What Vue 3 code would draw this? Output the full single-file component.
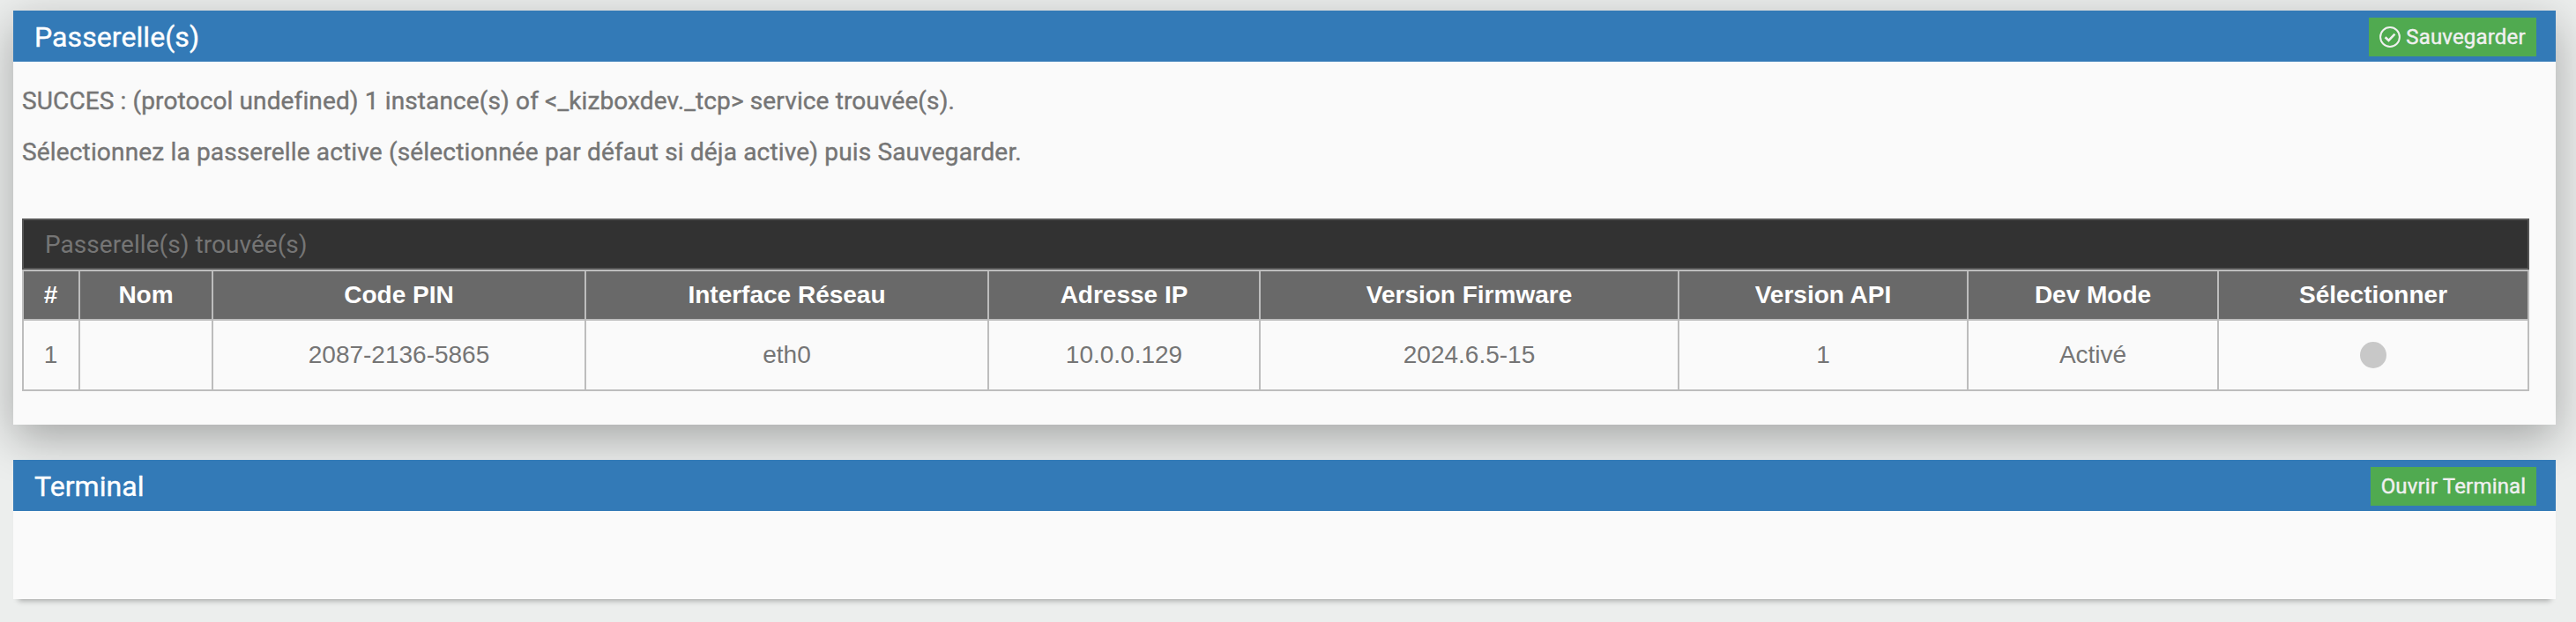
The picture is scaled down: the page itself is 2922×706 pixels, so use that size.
<template>
  <main class="page">
    <section class="panel panel-raised">
      <header class="panel-header">
        <h3 class="panel-title">Passerelle(s)</h3>
        <button class="btn-save" type="button">
          <svg class="icon" viewBox="0 0 24 24" aria-hidden="true">
            <circle cx="12" cy="12" r="10.9" />
            <path d="M6.6 12.2l3.9 3.7 7-7.2" />
          </svg>
          <span>Sauvegarder</span>
        </button>
      </header>
      <div class="panel-body">
        <p class="message message-status">SUCCES : (protocol undefined) 1 instance(s) of &lt;_kizboxdev._tcp&gt; service trouvée(s).</p>
        <p class="message">Sélectionnez la passerelle active (sélectionnée par défaut si déja active) puis Sauvegarder.</p>
        <div class="table-title">Passerelle(s) trouvée(s)</div>
        <table class="gateways">
          <colgroup>
            <col v-for="col in columns" :key="col.key" :style="{ width: col.width + 'px' }" />
          </colgroup>
          <thead>
            <tr>
              <th v-for="col in columns" :key="col.key">{{ col.label }}</th>
            </tr>
          </thead>
          <tbody>
            <tr v-for="gateway in gateways" :key="gateway.id">
              <td v-for="col in columns" :key="col.key">
                <button
                  v-if="col.key === 'select'"
                  class="radio"
                  :class="{ active: selected === gateway.id }"
                  type="button"
                  @click="selected = gateway.id"
                ></button>
                <span v-else>{{ gateway[col.key] }}</span>
              </td>
            </tr>
          </tbody>
        </table>
      </div>
    </section>

    <section class="panel panel-flat">
      <header class="panel-header">
        <h3 class="panel-title">Terminal</h3>
        <button class="btn-save btn-terminal" type="button">Ouvrir Terminal</button>
      </header>
      <div class="panel-empty"></div>
    </section>
  </main>
</template>

<script setup>
import { ref } from 'vue';

const selected = ref(null);

const columns = [
  { key: 'id', label: '#', width: 64 },
  { key: 'name', label: 'Nom', width: 151 },
  { key: 'pin', label: 'Code PIN', width: 423 },
  { key: 'network', label: 'Interface Réseau', width: 457 },
  { key: 'ip', label: 'Adresse IP', width: 308 },
  { key: 'firmware', label: 'Version Firmware', width: 475 },
  { key: 'api', label: 'Version API', width: 328 },
  { key: 'devMode', label: 'Dev Mode', width: 284 },
  { key: 'select', label: 'Sélectionner', width: 352 },
];

const gateways = [
  {
    id: 1,
    name: '',
    pin: '2087-2136-5865',
    network: 'eth0',
    ip: '10.0.0.129',
    firmware: '2024.6.5-15',
    api: 1,
    devMode: 'Activé',
  },
];
</script>

<style>
body {
  margin: 0;
  background: #eceeed;
}
</style>

<style scoped>
.page {
  box-sizing: border-box;
  height: 706px;
  padding: 12px 23px 0 15px;
  overflow: hidden;
  background: #eceeed;
  font-family: Roboto, "Liberation Sans", sans-serif;
  font-size: 28px;
  color: #757575;
}

.panel {
  background: #fafafa;
}

.panel-raised {
  height: 470px;
  margin-bottom: 40px;
  box-shadow: 0 16px 48px rgba(0, 0, 0, 0.3);
}

.panel-flat {
  position: relative;
  height: 158px;
  box-shadow: 0 8px 6px -6px rgba(0, 0, 0, 0.3);
}

.panel-header {
  box-sizing: border-box;
  display: flex;
  justify-content: space-between;
  align-items: flex-start;
  height: 58px;
  padding: 8px 22px 0 24px;
  background: #337ab7;
}

.panel-title {
  margin: 0;
  font-size: 32px;
  font-weight: 400;
  line-height: 44px;
  letter-spacing: 0.08px;
  color: #fff;
  -webkit-text-stroke: 0.4px currentColor;
}

.btn-save {
  display: flex;
  align-items: center;
  justify-content: center;
  gap: 6px;
  width: 190px;
  height: 44px;
  padding: 0;
  border: 0;
  background: #50aa50;
  color: #f0f0f0;
  font-family: inherit;
  font-size: 24px;
  line-height: 44px;
  letter-spacing: 0.18px;
  white-space: nowrap;
  cursor: pointer;
  -webkit-text-stroke: 0.4px currentColor;
}

.btn-terminal {
  width: 188px;
}

.icon {
  flex-shrink: 0;
  width: 24px;
  height: 24px;
  fill: none;
  stroke: #f0f0f0;
  stroke-width: 2;
}

.icon path {
  stroke-width: 2.6;
}

.panel-body {
  padding: 16px 30px 0 10px;
}

.message {
  margin: 0;
  height: 58px;
  line-height: 58px;
  letter-spacing: 0.16px;
  white-space: nowrap;
  -webkit-text-stroke: 0.4px currentColor;
}

.message-status {
  letter-spacing: 0.125px;
}

.table-title {
  box-sizing: border-box;
  height: 58px;
  margin-top: 46px;
  padding-left: 24px;
  border: 2px solid #555;
  background: #323232;
  line-height: 56px;
  letter-spacing: 0.05px;
}

.gateways {
  width: 2844px;
  table-layout: fixed;
  border-collapse: collapse;
  font-family: "Liberation Sans", sans-serif;
  text-align: center;
}

.gateways th,
.gateways td {
  box-sizing: border-box;
  padding: 0;
  border: 2px solid #bdbdbd;
}

.gateways th {
  height: 56px;
  background: #696969;
  color: #fff;
  line-height: 54px;
}

.gateways td {
  height: 80px;
}

.gateways th:first-child,
.gateways td:first-child {
  padding-right: 1px;
}

.radio {
  display: block;
  width: 30px;
  height: 30px;
  margin: 0 auto;
  padding: 0;
  border: 0;
  border-radius: 50%;
  background: #c8c8c8;
  cursor: pointer;
}

.radio.active {
  background: #50aa50;
}

.panel-empty {
  height: 100px;
}
</style>
